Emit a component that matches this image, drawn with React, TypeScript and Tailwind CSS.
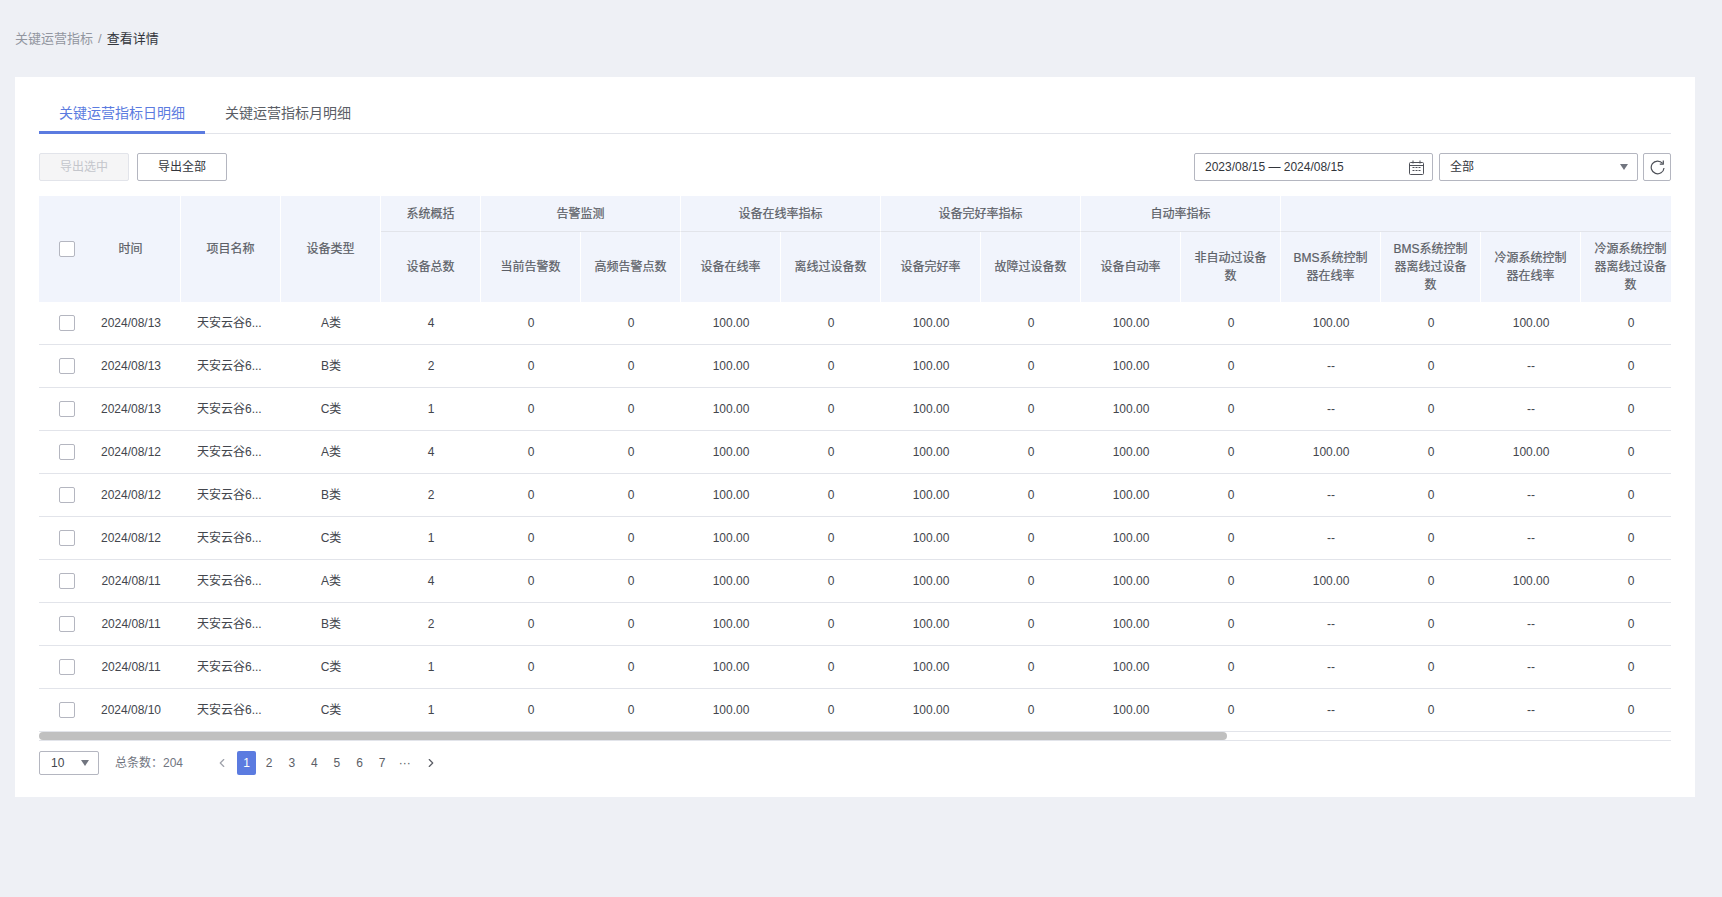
import { ChevronLeft, ChevronRight } from 'lucide-react';

const FONT = 'font-["Liberation_Sans","Microsoft_YaHei","Noto_Sans_CJK_SC",sans-serif]';

// Header groups, null name means a blank group cell
const GROUPS: { name: string; span: number }[] = [
  { name: '系统概括', span: 1 },
  { name: '告警监测', span: 2 },
  { name: '设备在线率指标', span: 2 },
  { name: '设备完好率指标', span: 2 },
  { name: '自动率指标', span: 2 },
  { name: '', span: 4 },
];

const SUB_COLUMNS = [
  '设备总数',
  '当前告警数',
  '高频告警点数',
  '设备在线率',
  '离线过设备数',
  '设备完好率',
  '故障过设备数',
  '设备自动率',
  '非自动过设备数',
  'BMS系统控制器在线率',
  'BMS系统控制器离线过设备数',
  '冷源系统控制器在线率',
  '冷源系统控制器离线过设备数',
];

const ROWS = [
  { date: '2024/08/13', type: 'A类', total: 4 },
  { date: '2024/08/13', type: 'B类', total: 2 },
  { date: '2024/08/13', type: 'C类', total: 1 },
  { date: '2024/08/12', type: 'A类', total: 4 },
  { date: '2024/08/12', type: 'B类', total: 2 },
  { date: '2024/08/12', type: 'C类', total: 1 },
  { date: '2024/08/11', type: 'A类', total: 4 },
  { date: '2024/08/11', type: 'B类', total: 2 },
  { date: '2024/08/11', type: 'C类', total: 1 },
  { date: '2024/08/10', type: 'C类', total: 1 },
];

const PAGES = ['1', '2', '3', '4', '5', '6', '7', '···'];

function Checkbox() {
  return <span className="block w-4 h-4 mx-auto bg-white border border-[#b4b6c0] rounded-[2px]" />;
}

function Caret() {
  return (
    <svg className="w-2 h-[6px]" viewBox="0 0 8 6" fill="#71757f">
      <path d="M0 0h8L4 6z" />
    </svg>
  );
}

function CalendarIcon() {
  return (
    <svg className="w-[15px] h-[15px]" viewBox="0 0 15 15" fill="none" stroke="#4e5158">
      <rect x="0.5" y="2.5" width="14" height="12" rx="1" />
      <path d="M0.5 5.5h14M4 0.5v3M11 0.5v3" />
      <path d="M3.5 7.5h2M6.5 7.5h2M9.5 7.5h2M3.5 10.5h2M6.5 10.5h2M9.5 10.5h2" />
    </svg>
  );
}

function RefreshIcon() {
  return (
    <svg className="w-[15px] h-[15px]" viewBox="0 0 15 15" fill="none" stroke="#4e5158" strokeWidth="1.2">
      <path d="M12.6 3.4A6.4 6.4 0 1 0 14 8" />
      <path d="M13.3 0.6v3.6H9.8" strokeLinejoin="round" />
    </svg>
  );
}

function DataTable() {
  const th = 'border-r border-white bg-[#f1f4fc] font-normal text-[#5b5e66] [-webkit-text-stroke:0.2px]';
  return (
    <div className="overflow-hidden">
      <table className="table-fixed border-separate border-spacing-0 w-[1642px] text-xs leading-[18px]">
        <colgroup>
          <col className="w-[42px]" />
          {Array.from({ length: 16 }).map((_, i) => (
            <col key={i} className="w-[100px]" />
          ))}
        </colgroup>
        <thead>
          <tr className="h-[36px]">
            <th rowSpan={2} className="bg-[#f1f4fc] pl-[20px] pr-[6px]">
              <Checkbox />
            </th>
            <th rowSpan={2} className={th}>时间</th>
            <th rowSpan={2} className={th}>项目名称</th>
            <th rowSpan={2} className={th}>设备类型</th>
            {GROUPS.map((g, i) => (
              <th key={i} colSpan={g.span} className={`${th} border-b !border-b-[#e2e4ea]`}>
                {g.name}
              </th>
            ))}
          </tr>
          <tr className="h-[70px]">
            {SUB_COLUMNS.map((name) => (
              <th key={name} className={`${th} px-[12px]`}>
                {name}
              </th>
            ))}
          </tr>
        </thead>
        <tbody className="text-[#43464d] text-center">
          {ROWS.map((row, i) => (
            <tr key={i} className="h-[43px]">
              <td className="pl-[20px] pr-[6px] border-b border-[#e2e4ea]">
                <Checkbox />
              </td>
              <td className="border-b border-[#e2e4ea]">{row.date}</td>
              <td className="border-b border-[#e2e4ea] text-left pl-[16px]">天安云谷6...</td>
              <td className="border-b border-[#e2e4ea]">{row.type}</td>
              <td className="border-b border-[#e2e4ea]">{row.total}</td>
              <td className="border-b border-[#e2e4ea]">0</td>
              <td className="border-b border-[#e2e4ea]">0</td>
              <td className="border-b border-[#e2e4ea]">100.00</td>
              <td className="border-b border-[#e2e4ea]">0</td>
              <td className="border-b border-[#e2e4ea]">100.00</td>
              <td className="border-b border-[#e2e4ea]">0</td>
              <td className="border-b border-[#e2e4ea]">100.00</td>
              <td className="border-b border-[#e2e4ea]">0</td>
              <td className="border-b border-[#e2e4ea]">{row.type === 'A类' ? '100.00' : '--'}</td>
              <td className="border-b border-[#e2e4ea]">0</td>
              <td className="border-b border-[#e2e4ea]">{row.type === 'A类' ? '100.00' : '--'}</td>
              <td className="border-b border-[#e2e4ea]">0</td>
            </tr>
          ))}
        </tbody>
      </table>
      <div className="h-[8px] border-b border-[#e2e4ea] box-content">
        <div className="h-[8px] w-[1188px] bg-[#c0c0c0] rounded-[4px]" />
      </div>
    </div>
  );
}

function Pagination() {
  return (
    <div className="flex items-center mt-[10px] h-[24px] text-xs">
      <div className="flex items-center justify-between w-[60px] h-[24px] pl-[11px] pr-[9px] border border-[#b4b6c0] rounded-[2px] text-[#43464d]">
        <span>10</span>
        <Caret />
      </div>
      <span className="ml-[16px] text-[#71757f]">总条数：204</span>
      <div className="flex items-center ml-[32px] text-[#5b5e66]">
        <ChevronLeft className="w-[14px] h-[14px] text-[#9ea1aa] mr-[8px]" />
        {PAGES.map((page, i) => (
          <span
            key={page}
            className={`flex items-center justify-center w-[19px] h-[24px] mr-[3.6px] rounded-[2px] ${
              i === 0 ? 'bg-[#5b7be0] text-white' : ''
            }`}
          >
            {page}
          </span>
        ))}
        <ChevronRight className="w-[14px] h-[14px] text-[#5b5e66] ml-[6px]" />
      </div>
    </div>
  );
}

export default function App() {
  return (
    <div className={`w-[1722px] h-[897px] bg-[#eef0f5] overflow-hidden ${FONT}`}>
      <div className="flex items-center h-[77px] pl-[15px] pt-[1px] text-[13px]">
        <span className="text-[#9296a0]">关键运营指标</span>
        <span className="mx-[5px] text-[#9296a0]">/</span>
        <span className="text-[#33363c]">查看详情</span>
      </div>

      <div className="ml-[15px] w-[1680px] h-[720px] bg-white pt-[24px] px-[24px]">
        <div className="flex h-[32px] border-b border-[#e2e4ea] box-content text-sm">
          <div className="w-[166px] h-[33px] text-center text-[#5b7be0] border-b-[3px] border-[#5b7be0] leading-[24px]">
            关键运营指标日明细
          </div>
          <div className="w-[166px] text-center text-[#5b5e66] leading-[24px]">关键运营指标月明细</div>
        </div>

        <div className="flex items-center mt-[19px] h-[28px] mb-[15px] text-xs">
          <button type="button" className="w-[90px] h-[28px] bg-[#f5f5f6] border border-[#e2e4ea] rounded-[2px] text-[#c4c6cc]">
            导出选中
          </button>
          <button type="button" className="w-[90px] h-[28px] ml-[8px] border border-[#b4b6c0] rounded-[2px] text-[#33363c]">
            导出全部
          </button>
          <div className="flex items-center justify-between w-[239px] h-[28px] ml-auto pl-[10px] pr-[8px] border border-[#b4b6c0] rounded-[2px] text-[#33363c]">
            <span>2023/08/15 — 2024/08/15</span>
            <CalendarIcon />
          </div>
          <div className="flex items-center justify-between w-[199px] h-[28px] ml-[6px] pl-[10px] pr-[9px] border border-[#b4b6c0] rounded-[2px] text-[#33363c]">
            <span>全部</span>
            <Caret />
          </div>
          <div className="flex items-center justify-center w-[28px] h-[28px] ml-[5px] border border-[#b4b6c0] rounded-[2px]">
            <RefreshIcon />
          </div>
        </div>

        <DataTable />
        <Pagination />
      </div>
    </div>
  );
}
